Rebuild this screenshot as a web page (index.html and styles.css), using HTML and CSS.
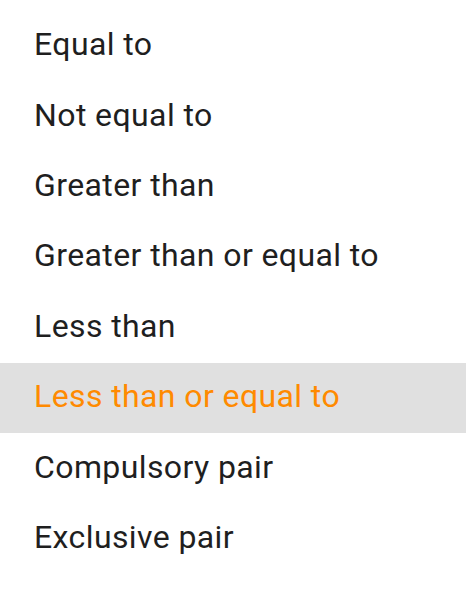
FILE: index.html
```html
<!DOCTYPE html>
<html>
<head>
<meta charset="utf-8">
<link rel="stylesheet" href="styles.css">
</head>
<body>
<ul class="menu">
  <li class="item">Equal to</li>
  <li class="item">Not equal to</li>
  <li class="item">Greater than</li>
  <li class="item">Greater than or equal to</li>
  <li class="item">Less than</li>
  <li class="item active">Less than or equal to</li>
  <li class="item">Compulsory pair</li>
  <li class="item">Exclusive pair</li>
</ul>
</body>
</html>
```
FILE: styles.css
```css
html, body {
  margin: 0;
  padding: 0;
  background: #ffffff;
}
.menu {
  list-style: none;
  margin: 0;
  padding: 11px 0 0 0;
  font-family: Roboto, "Liberation Sans", sans-serif;
}
.item {
  box-sizing: border-box;
  height: 70.4px;
  display: flex;
  align-items: center;
  padding: 0 0 4px 34px;
  font-size: 32px;
  letter-spacing: 0.4px;
  color: #1f1f1f;
}
.item.active {
  background: #e0e0e0;
  color: #ff8a00;
}
```
